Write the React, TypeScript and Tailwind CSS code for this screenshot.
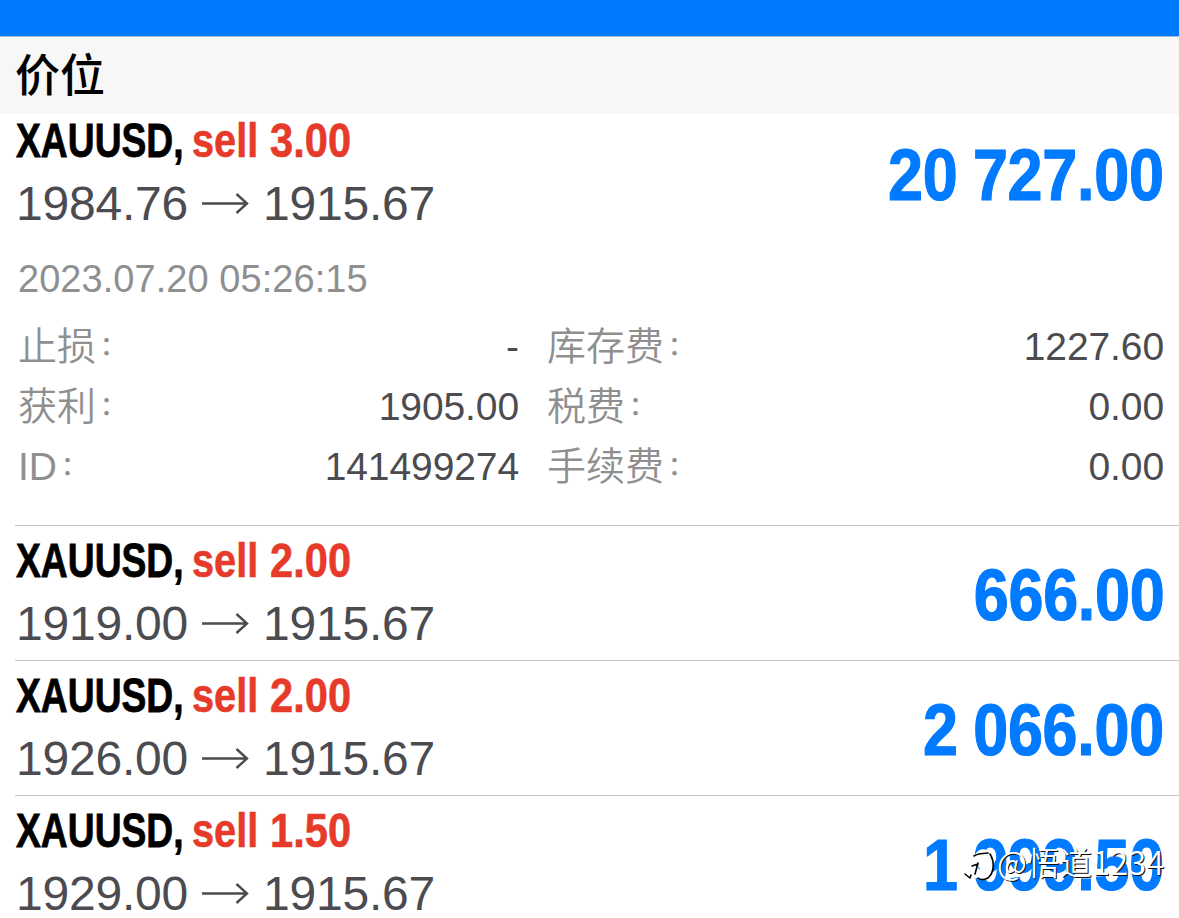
import type { ReactNode } from 'react'
import clsx from 'clsx'

type Position = { symbol: string; volume: string; open: string; current: string; profit: string }
type Detail = { label: string; value: string }

const positions: Position[] = [
  { symbol: 'XAUUSD', volume: '3.00', open: '1984.76', current: '1915.67', profit: '20 727.00' },
  { symbol: 'XAUUSD', volume: '2.00', open: '1919.00', current: '1915.67', profit: '666.00' },
  { symbol: 'XAUUSD', volume: '2.00', open: '1926.00', current: '1915.67', profit: '2 066.00' },
  { symbol: 'XAUUSD', volume: '1.50', open: '1929.00', current: '1915.67', profit: '1 999.50' },
]

const leftDetails: Detail[] = [
  { label: '止损', value: '-' },
  { label: '获利', value: '1905.00' },
  { label: 'ID', value: '141499274' },
]

const rightDetails: Detail[] = [
  { label: '库存费', value: '1227.60' },
  { label: '税费', value: '0.00' },
  { label: '手续费', value: '0.00' },
]

function Arrow() {
  return (
    <svg viewBox="0 0 48 24" className="h-6 w-12 shrink-0" fill="none" stroke="currentColor" strokeWidth="2.4">
      <path d="M1 11.5H46M35.5 2L46 11.5L35.5 21" />
    </svg>
  )
}

function PositionRow({ position, first, children }: { position: Position; first?: boolean; children?: ReactNode }) {
  return (
    <section className="ml-[15px] border-b border-[#c4c4c6] pr-[15px]">
      <div className={clsx('flex justify-between', first ? 'h-[126px] pt-0.5' : 'h-[134px] pt-2.5')}>
        <div>
          <div className="flex h-12 text-[49px] leading-[48px] font-bold whitespace-nowrap">
            <div className="w-[177px] pl-px">
              <span className="inline-block origin-left scale-x-[0.76] text-black [-webkit-text-stroke:0.8px]">
                {position.symbol},
              </span>
            </div>
            <div className="w-[78px]">
              <span className="inline-block origin-left scale-x-[0.81] text-[#e63a2a] [-webkit-text-stroke:0.6px]">
                sell
              </span>
            </div>
            <span className="inline-block origin-left scale-x-[0.85] text-[#e63a2a] [-webkit-text-stroke:0.6px]">
              {position.volume}
            </span>
          </div>
          <div className="mt-4 flex h-12 items-center text-[48px] leading-[48px] text-[#4b4b50]">
            <span className="w-[186px] pl-px tracking-[-0.2px]">{position.open}</span>
            <Arrow />
            <span className="ml-[14px] tracking-[-0.2px]">{position.current}</span>
          </div>
        </div>
        <div className="mt-[23px] h-[72px] origin-right scale-x-[0.873] text-[72px] leading-[72px] font-bold tracking-[-0.3px] [word-spacing:-2px] whitespace-nowrap text-[#007aff] [-webkit-text-stroke:1.2px]">
          {position.profit}
        </div>
      </div>
      {children}
    </section>
  )
}

function DetailList({ items }: { items: Detail[] }) {
  return (
    <dl className="text-[39px] leading-[60px]">
      {items.map((item) => (
        <div key={item.label} className="flex h-[60px] justify-between">
          <dt className="flex font-[350] text-[#8f8f8f]">
            <span>{item.label}</span>
            <span className="-mt-px ml-1 text-[26px] font-medium">：</span>
          </dt>
          <dd className="tracking-[-0.1px] text-[#4b4b50]">{item.value}</dd>
        </div>
      ))}
    </dl>
  )
}

function Watermark() {
  return (
    <div className="absolute top-[840px] left-[963px] flex items-center whitespace-nowrap">
      <svg viewBox="0 0 34 44" className="h-11 w-[34px]" fill="none" strokeLinecap="round" strokeLinejoin="round">
        <path
          d="M11 17C14 9 21 7 27 12C33 18 31 33 25 38C21 41 16 41 14 38L17 29L14 25L8 29L7 38L2 36L8 25Z"
          fill="#fff"
        />
        <path
          d="M11 16C15 13 20 14 25 13M27 14C32 22 31 33 25 38C21 40 17 40 15 38M9 26L15 24M15 23L12 34M2 34L7 38L8 35"
          stroke="#000"
          strokeWidth="1.6"
        />
      </svg>
      <span className="-mt-0.5 font-['Noto_Sans_CJK_SC',sans-serif] text-[32px] leading-[44px] font-[350] tracking-[0.5px] text-white [text-shadow:1px_1px_0.5px_#111]">
        @悟道1234
      </span>
    </div>
  )
}

export default function App() {
  return (
    <main className="relative h-[918px] w-[1179px] overflow-hidden bg-white font-['Liberation_Sans','Noto_Sans_CJK_SC',sans-serif]">
      <div className="h-9 bg-[#007aff]" />
      <header className="h-[78px] border-t border-[#a9b9cf] bg-[#f7f7f7] pt-[3px] pl-[15px]">
        <h1 className="text-[45px] leading-[74px] font-medium text-black">价位</h1>
      </header>

      {positions.map((position, i) => (
        <PositionRow key={i} position={position} first={i === 0}>
          {i === 0 && (
            <div className="pb-7">
              <p className="mt-[19px] mb-[18px] h-10 pl-[3px] text-[38px] leading-10 tracking-[0.05px] text-[#8f8f8f]">
                2023.07.20 05:26:15
              </p>
              <div className="grid grid-cols-[501px_617px] gap-x-7 pl-[3px]">
                <DetailList items={leftDetails} />
                <DetailList items={rightDetails} />
              </div>
            </div>
          )}
        </PositionRow>
      ))}

      <Watermark />
    </main>
  )
}
